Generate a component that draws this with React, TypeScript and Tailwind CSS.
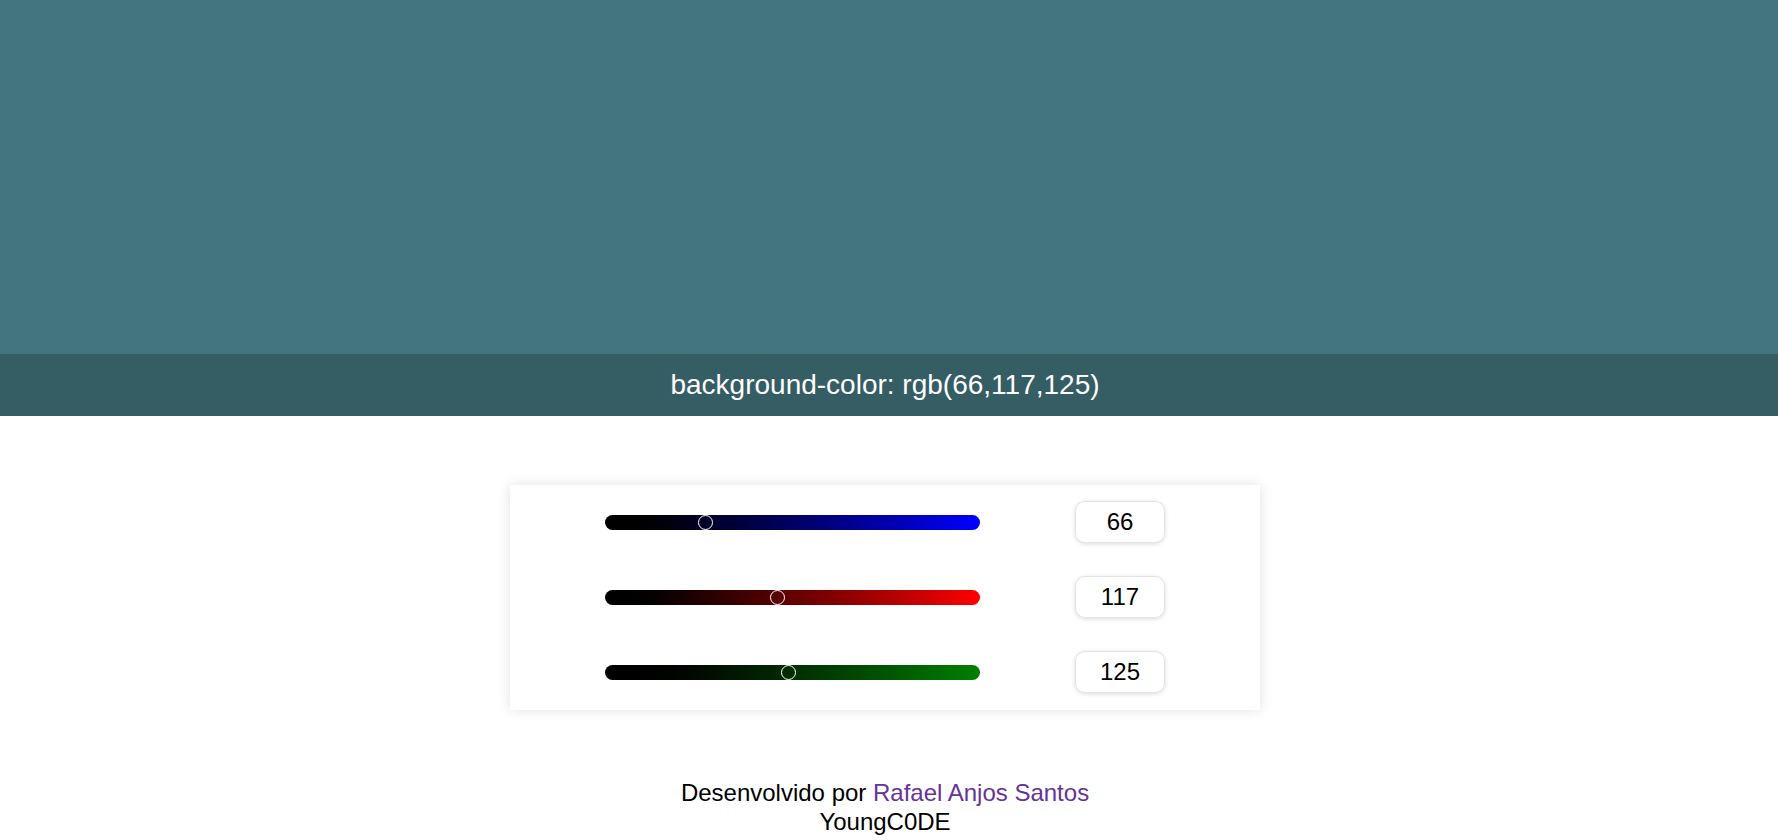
import { useState } from 'react';

const sliders = [
    { key: 'b', track: 'bg-linear-to-r from-black to-[#0000ff]' },
    { key: 'r', track: 'bg-linear-to-r from-black to-[#ff0000]' },
    { key: 'g', track: 'bg-linear-to-r from-black to-[#008000]' },
];

const App = () => {
    // the sliders are laid out blue, red, green but feed the rgb() in this order
    const [values, setValues] = useState([66, 117, 125]);

    const update = (index: number, raw: string) => {
        let n = parseInt(raw, 10);
        if (isNaN(n)) n = 0;
        n = Math.max(0, Math.min(255, n));
        setValues((prev) => prev.map((v, i) => (i === index ? n : v)));
    };

    const color = `rgb(${values[0]},${values[1]},${values[2]})`;

    return (
        <div className="min-h-screen bg-white font-['Liberation_Sans',Arial,sans-serif] text-black">
            <div className="h-[416px] flex flex-col justify-end" style={{ backgroundColor: color }}>
                <div className="h-[62px] bg-black/20 flex items-center justify-center pr-2">
                    <span className="text-white text-[28px]">background-color: {color}</span>
                </div>
            </div>

            <div className="flex justify-center pr-2 mt-[69px]">
                <div className="w-[750px] bg-white shadow-[0_0_12px_rgba(0,0,0,0.12)] pt-4 pb-[17px] flex flex-col gap-[33px]">
                    {sliders.map((s, i) => (
                        <div key={s.key} className="flex items-center justify-evenly h-[42px]">
                            <input
                                type="range"
                                min={0}
                                max={255}
                                value={values[i]}
                                onChange={(e) => update(i, e.target.value)}
                                className={`appearance-none w-[375px] h-[15px] rounded-full outline-none ${s.track} [&::-webkit-slider-thumb]:appearance-none [&::-webkit-slider-thumb]:w-[15px] [&::-webkit-slider-thumb]:h-[15px] [&::-webkit-slider-thumb]:rounded-full [&::-webkit-slider-thumb]:border [&::-webkit-slider-thumb]:border-white [&::-webkit-slider-thumb]:bg-transparent`}
                            />
                            <input
                                type="text"
                                value={values[i]}
                                onChange={(e) => update(i, e.target.value)}
                                className="w-[90px] h-[42px] rounded-[10px] border border-[#e3e3e3] shadow-[0_1px_4px_rgba(0,0,0,0.15)] text-center text-[24px] outline-none"
                            />
                        </div>
                    ))}
                </div>
            </div>

            <footer className="flex flex-col items-center pr-2 mt-[68px] text-[24px] leading-[29px]">
                <p>
                    Desenvolvido por <a className="text-[#663399]">Rafael Anjos Santos</a>
                </p>
                <p>YoungC0DE</p>
            </footer>
        </div>
    );
};

export default App;
